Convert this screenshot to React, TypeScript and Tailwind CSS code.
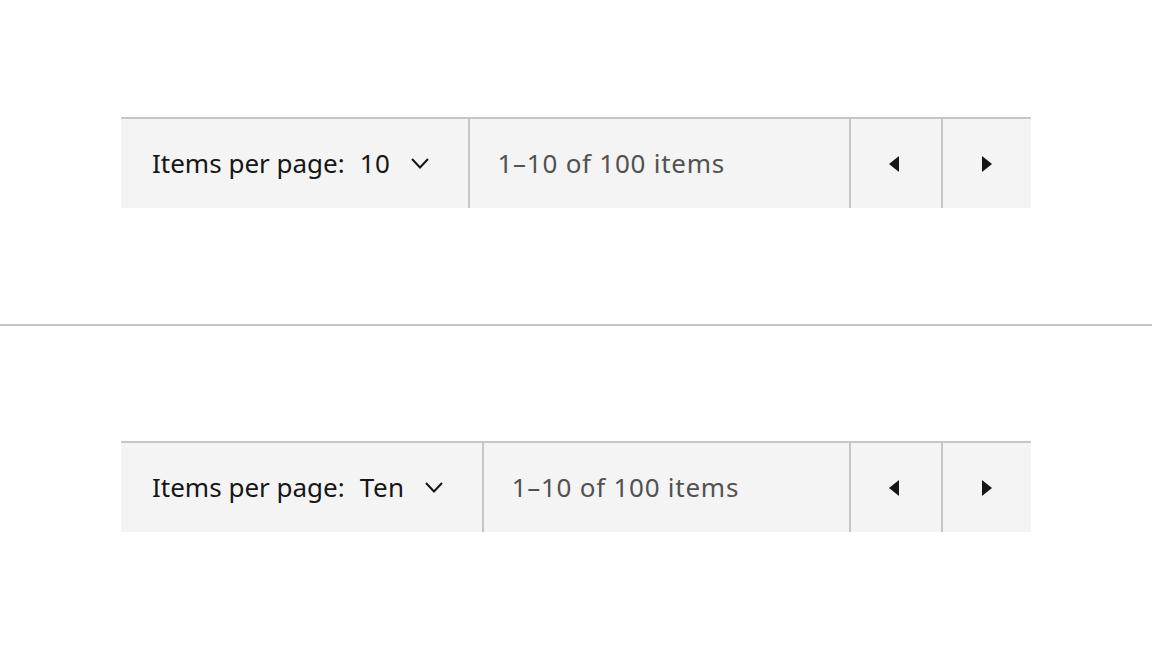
import React from "react";

function Chevron() {
  return (
    <svg width="18" height="11" viewBox="0 0 18 11" fill="none">
      <path d="M1 1 L9 9.5 L17 1" stroke="#161616" strokeWidth="2" />
    </svg>
  );
}

function Caret({ dir }: { dir: "left" | "right" }) {
  return (
    <svg width="10" height="16" viewBox="0 0 10 16">
      {dir === "left" ? <path d="M10 0 L0 8 L10 16 Z" fill="#161616" /> : <path d="M0 0 L10 8 L0 16 Z" fill="#161616" />}
    </svg>
  );
}

function Bar({ value }: { value: string }) {
  return (
    <div className="mx-[121px] flex h-[91px] border-t-2 border-[#c6c6c6] bg-[#f4f4f4] text-[26px]">
      <div className="flex items-center border-r-2 border-[#c6c6c6] pl-[31px] pr-[39px] pb-[1px] text-[#161616]">
        <span>Items per page:</span>
        <span className="ml-[15px] tracking-[0.5px]">{value}</span>
        <span className="ml-[20px] flex items-center pt-[1px]">
          <Chevron />
        </span>
      </div>
      <div className="flex flex-1 items-center pl-[28px] pb-[1px] tracking-[0.75px] text-[#525252]">1–10 of 100 items</div>
      <div className="flex w-[92px] items-center justify-center border-l-2 border-[#c6c6c6] pr-[4px]">
        <Caret dir="left" />
      </div>
      <div className="flex w-[90px] items-center justify-center border-l-2 border-[#c6c6c6] pr-[1px]">
        <Caret dir="right" />
      </div>
    </div>
  );
}

export default function App() {
  return (
    <div className="h-[648px] w-[1152px] bg-white" style={{ fontFamily: '"Noto Sans", sans-serif' }}>
      <div className="flex h-[324px] flex-col pt-[117px]">
        <Bar value="10" />
      </div>
      <div className="h-[2px] bg-[#c6c6c6]" />
      <div className="flex flex-col pt-[115px]">
        <Bar value="Ten" />
      </div>
    </div>
  );
}
